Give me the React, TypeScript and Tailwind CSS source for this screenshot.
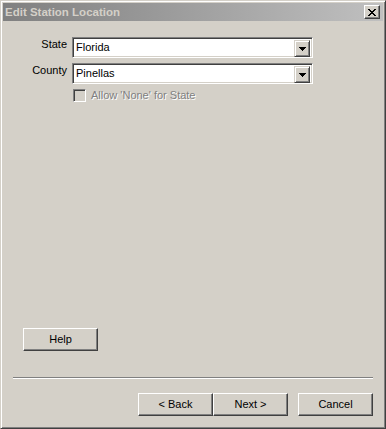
import React from "react";

const raised =
  "border border-t-white border-l-white border-r-[#404040] border-b-[#404040] shadow-[inset_-1px_-1px_0_#808080]";
const sunken =
  "border border-t-[#808080] border-l-[#808080] border-r-white border-b-white shadow-[inset_1px_1px_0_#404040,inset_-1px_-1px_0_#d4d0c8]";

function CloseGlyph() {
  // 8x7 pixel X, classic caption button glyph
  const rows = ["11000011", "01100110", "00111100", "00011000", "00111100", "01100110", "11000011"];
  return (
    <svg width="8" height="7" viewBox="0 0 8 7" shapeRendering="crispEdges">
      {rows.map((r, y) =>
        r.split("").map((c, x) => (c === "1" ? <rect key={`${x}-${y}`} x={x} y={y} width="1" height="1" fill="#000" /> : null))
      )}
    </svg>
  );
}

function Arrow() {
  return (
    <svg width="7" height="4" viewBox="0 0 7 4" shapeRendering="crispEdges">
      <rect x="0" y="0" width="7" height="1" fill="#000" />
      <rect x="1" y="1" width="5" height="1" fill="#000" />
      <rect x="2" y="2" width="3" height="1" fill="#000" />
      <rect x="3" y="3" width="1" height="1" fill="#000" />
    </svg>
  );
}

function Combo({ label, value }: { label: string; value: string }) {
  return (
    <div className="flex items-start">
      <div className="w-[64px] text-right pt-[1px] leading-[13px]">{label}</div>
      <div className={`ml-[5px] w-[241px] h-[21px] bg-white flex items-start p-[2px] ${sunken}`}>
        <div className="flex-1 pl-[1px] pt-[1px] leading-[13px]">{value}</div>
        <div className="w-[16px] h-[17px] bg-[#d4d0c8] flex items-center justify-center border border-t-[#d4d0c8] border-l-[#d4d0c8] border-r-[#404040] border-b-[#404040] shadow-[inset_1px_1px_0_#fff,inset_-1px_-1px_0_#808080]">
          <Arrow />
        </div>
      </div>
    </div>
  );
}

function Btn({ children, className = "" }: { children: React.ReactNode; className?: string }) {
  return (
    <button className={`w-[75px] h-[23px] bg-[#d4d0c8] flex items-center justify-center leading-[13px] ${raised} ${className}`}>
      {children}
    </button>
  );
}

export default function App() {
  return (
    <div className="w-[386px] h-[429px] bg-[#d4d0c8] border border-t-[#d4d0c8] border-l-[#d4d0c8] border-r-[#404040] border-b-[#404040] shadow-[inset_1px_1px_0_#fff,inset_-1px_-1px_0_#808080] p-[2px] flex flex-col text-[11px] text-black font-['Liberation_Sans',Arial,sans-serif]">
      {/* title bar (inactive) */}
      <div className="h-[18px] flex items-center justify-between pl-[2px] pr-[3px] bg-linear-to-r from-[#808080] to-[#c0c0c0]">
        <span className="font-bold text-[11.5px] text-[#d4d0c8] leading-[13px]">Edit Station Location</span>
        <div className={`w-[16px] h-[14px] bg-[#d4d0c8] flex items-center justify-center ${raised}`}>
          <CloseGlyph />
        </div>
      </div>

      <div className="flex-1 flex flex-col">
        <div className="mt-[16px]">
          <Combo label="State" value="Florida" />
        </div>
        <div className="mt-[5px]">
          <Combo label="County" value="Pinellas" />
        </div>
        <div className="mt-[5px] ml-[70px] flex items-center h-[13px]">
          <div className={`w-[13px] h-[13px] bg-[#d4d0c8] ${sunken}`} />
          <span className="ml-[5px] leading-[13px] text-[#808080] [text-shadow:1px_1px_0_#fff]">Allow 'None' for State</span>
        </div>

        <div className="flex-1" />

        <Btn className="ml-[20px]">Help</Btn>

        <div className="mt-[26px] mx-[10px] h-[2px] border-t border-t-[#808080] border-b border-b-white" />

        <div className="mt-[14px] mb-[10px] pr-[10px] flex justify-end">
          <Btn>&lt; Back</Btn>
          <Btn>Next &gt;</Btn>
          <Btn className="ml-[10px]">Cancel</Btn>
        </div>
      </div>
    </div>
  );
}
